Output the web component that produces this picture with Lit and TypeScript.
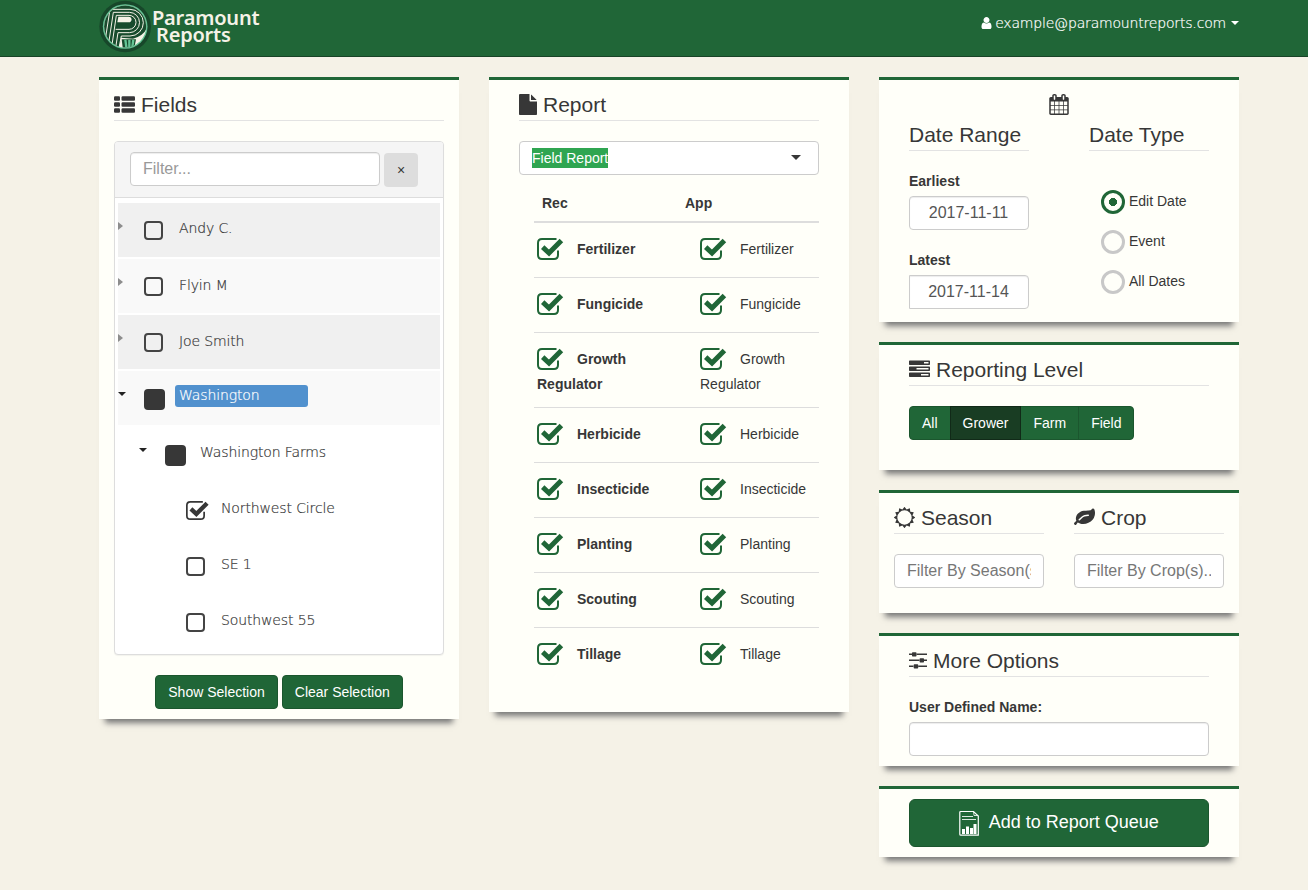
import { LitElement, html, css, svg, nothing } from "lit";
import { customElement } from "lit/decorators.js";

const row = (x: number, w: number, y: number) => svg`<rect x=${x} y=${y} width=${w} height="384" rx="96"/>`;

// Hollow sun: a ring of twelve short teeth around an open disc.
const sunPath = (() => {
  const pts: string[] = [];
  for (let i = 0; i < 24; i++) {
    const r = i % 2 ? 8.2 : 10.7;
    const a = (i * Math.PI) / 12;
    pts.push(`${(10.5 + r * Math.sin(a)).toFixed(2)} ${(10.5 - r * Math.cos(a)).toFixed(2)}`);
  }
  return `M${pts.join("L")}ZM10.5 3.3a7.2 7.2 0 1 0 0 14.4a7.2 7.2 0 1 0 0-14.4Z`;
})();

const icons = {
  list: html`<svg class="fa" width="21" height="21" viewBox="0 0 1792 1792">${[192, 704, 1216].map((y) => svg`${row(0, 512, y)}${row(640, 1152, y)}`)}</svg>`,
  file: html`<svg class="fa" width="18" height="21" viewBox="128 0 1536 1792"><path d="M1152 512v-472q22 14 36 28l408 408q14 14 28 36h-472zm-128 32q0 40 28 68t68 28h544v1056q0 40-28 68t-68 28h-1344q-40 0-68-28t-28-68v-1600q0-40 28-68t68-28h800v544z"/></svg>`,
  calendar: html`<svg class="fa" width="20" height="21" viewBox="64 0 1664 1792"><path fill-rule="evenodd" d="M192 1664h288v-288h-288v288zm352 0h320v-288h-320v288zm-352-352h288v-320h-288v320zm352 0h320v-320h-320v320zm-352-384h288v-288h-288v288zm736 736h320v-288h-320v288zm-384-736h320v-288h-320v288zm768 736h288v-288h-288v288zm-384-352h320v-320h-320v320zm-352-864v-288q0-13-9.500-22.500t-22.500-9.500h-64q-13 0-22.500 9.500t-9.500 22.500v288q0 13 9.500 22.500t22.500 9.500h64q13 0 22.500-9.500t9.500-22.500zm736 864h288v-320h-288v320zm-384-384h320v-288h-320v288zm384 0h288v-288h-288v288zm32-480v-288q0-13-9.500-22.500t-22.500-9.500h-64q-13 0-22.500 9.500t-9.500 22.500v288q0 13 9.500 22.500t22.500 9.500h64q13 0 22.500-9.500t9.500-22.500zm384-64v1280q0 52-38 90t-90 38h-1408q-52 0-90-38t-38-90v-1280q0-52 38-90t90-38h128v-96q0-66 47-113t113-47h64q66 0 113 47t47 113v96h384v-96q0-66 47-113t113-47h64q66 0 113 47t47 113v96h128q52 0 90 38t38 90z"/></svg>`,
  tasks: html`<svg class="fa" width="21" height="21" viewBox="0 0 1792 1792"><path fill-rule="evenodd" d="M1024 1408h640v-128h-640zM640 896h1024v-128h-1024zM1280 384h384v-128h-384zM64 1152h1664q64 0 64 64v256q0 64-64 64h-1664q-64 0-64-64v-256q0-64 64-64zM64 640h1664q64 0 64 64v256q0 64-64 64h-1664q-64 0-64-64v-256q0-64 64-64zM64 128h1664q64 0 64 64v256q0 64-64 64h-1664q-64 0-64-64v-256q0-64 64-64z"/></svg>`,
  sun: html`<svg class="fa" width="21" height="21" viewBox="0 0 21 21"><path fill-rule="evenodd" d=${sunPath}/></svg>`,
  leaf: html`<svg class="fa" width="21" height="21" viewBox="0 0 1792 1792"><path d="M1280 704q0-26-19-45t-45-19q-172 0-318 49.500t-259.500 134-235.500 219.500q-19 21-19 45 0 26 19 45t45 19q24 0 45-19 27-24 74-71t67-66q137-124 268.500-176t313.500-52q26 0 45-19t19-45zm512-198q0 95-20 193-46 224-184.500 383t-357.500 268q-214 108-438 108-148 0-286-47-15-5-88-42t-96-37q-16 0-39.500 32t-45 70-52.500 70-60 32q-43 0-63.500-17.500t-45.500-59.500q-2-4-6-11t-5.500-10-3-9.500-1.500-13.500q0-35 31-73.500t68-65.500 68-56 31-48q0-4-14-38t-16-44q-9-51-9-104 0-115 43.500-220t119-184.500 170.500-139 204-95.500q55-18 145-25.500t179.500-9 178.500-6 163.500-24 113.500-56.500l29.500-29.500 29.500-28 27-20 36.500-16 43.500-4.500q39 0 70.500 46t47.500 112 24 124 8 96z"/></svg>`,
  sliders: html`<svg class="fa" width="18" height="21" viewBox="0 0 18 21"><path d="M0 3.500h3v1.500h-3zM7.500 3.500h10.500v1.500h-10.500zM0 9.600h10.500v1.500h-10.500zM15 9.600h3v1.500h-3zM0 15.600h4.500v1.500h-4.500zM9.200 15.600h8.800v1.500h-8.800z"/><rect x="3" y="2.200" width="4.500" height="4.200" rx=".7"/><rect x="10.600" y="8.200" width="4.400" height="4.300" rx=".7"/><rect x="4.700" y="14.200" width="4.500" height="4.300" rx=".7"/></svg>`,
  user: html`<svg class="fa" width="11" height="14" viewBox="256 0 1280 1792"><path d="M1536 1399q0 109-62.500 187t-150.500 78h-854q-88 0-150.500-78t-62.500-187q0-85 8.500-160.500t31.500-152 58.500-131 94-89 134.500-34.500q131 128 313 128t313-128q76 0 134.500 34.500t94 89 58.500 131 31.500 152 8.500 160.500zm-256-887q0 159-112.500 271.500t-271.500 112.500-271.500-112.500-112.500-271.500 112.500-271.500 271.500-112.500 271.500 112.500 112.500 271.500z"/></svg>`,
  queue: html`<svg width="20" height="26" viewBox="0 0 20 26"><path d="M1.700 1.500H14.500L19.300 6V25.200H1.700Q.8 25.200 .8 24.300V2.400Q.8 1.500 1.700 1.500Z" fill="none" stroke="#fff" stroke-width="1.200"/><path d="M14.500 1.500L15 5.500H19" fill="none" stroke="#fff" stroke-width=".8"/><path d="M3 6.500h11M3 9.500h14" stroke="#fff" stroke-width="1" opacity=".85"/><path d="M3 19h3v5h-3zM7 16.500h3v7.500h-3zM11 18h3v6h-3zM14.500 14h3v10h-3z" fill="#fff"/></svg>`,
};

const tick = (size: number) => html`<svg class="tick" width=${(size * 27) / 22} height=${size} viewBox="0 0 27 22"><path d="M19.500 1H5Q1 1 1 5V17Q1 21 5 21H17Q21 21 21 17V12.500" fill="none" stroke="currentColor" stroke-width="2"/><path d="M5.700 9.200L12 15L24.400 2.500" fill="none" stroke="currentColor" stroke-width="5"/></svg>`;

const nodes = [
  { name: "Andy C.", level: 0, state: "off", arrow: "closed", tone: "dark", shift: "" },
  { name: "Flyin M", level: 0, state: "off", arrow: "closed", tone: "light", shift: "low" },
  { name: "Joe Smith", level: 0, state: "off", arrow: "closed", tone: "dark", shift: "low" },
  { name: "Washington", level: 0, state: "some", arrow: "open", tone: "light", shift: "picked" },
  { name: "Washington Farms", level: 1, state: "some", arrow: "open", tone: "", shift: "" },
  { name: "Northwest Circle", level: 2, state: "on", arrow: "", tone: "", shift: "" },
  { name: "SE 1", level: 2, state: "off", arrow: "", tone: "", shift: "" },
  { name: "Southwest 55", level: 2, state: "off", arrow: "", tone: "", shift: "" },
];

const kinds = ["Fertilizer", "Fungicide", "Growth Regulator", "Herbicide", "Insecticide", "Planting", "Scouting", "Tillage"];

@customElement("app-root")
export class AppRoot extends LitElement {
  static styles = css`
    :host { display: block; min-height: 890px; background: #f5f2e7; color: #373737; font: 14px/20px "Liberation Sans", Arial, sans-serif; }
    * { box-sizing: border-box; }
    svg { display: block; flex: none; }
    .fa { fill: currentColor; }
    .nav { height: 57px; background: #206637; border-bottom: 1px solid #184427; }
    .wrap { width: 1140px; margin-left: 99px; }
    .bar { display: flex; justify-content: space-between; align-items: flex-start; }
    .brand { display: flex; color: #f5f2e7; }
    .brand-name { width: 110px; font: 600 20px/17px "Noto Sans", sans-serif; padding-top: 9px; letter-spacing: -0.2px; }
    .brand-name div { white-space: nowrap; height: 17px; }
    .brand-name .second { padding-left: 4px; }
    .account { display: flex; align-items: center; height: 20px; margin-top: 13px; color: #fff; font: 200 14px/20px "DejaVu Sans", sans-serif; letter-spacing: -0.18px; -webkit-text-stroke: 0.2px currentColor; }
    .account .mail { margin: 0 5px 0 3px; }
    .caret { width: 0; height: 0; border: 4px solid transparent; border-top-color: currentColor; border-bottom: 0; flex: none; }
    .cols { display: grid; grid-template-columns: repeat(3, 360px); gap: 30px; margin-top: 20px; align-items: start; }
    .stack { display: flex; flex-direction: column; gap: 20px; }
    .card { background: #fffff9; border-top: 3px solid #206637; padding: 0 30px; box-shadow: 0 10px 6px -6px #777; }
    .narrow { padding: 0 15px; }
    .h-fields { height: 642px; } .h-report { height: 635px; } .h-date { height: 245px; } .h-level { height: 128px; }
    .h-season { height: 123px; } .h-more { height: 133px; } .h-add { height: 71px; padding-top: 10px; }
    .title { display: flex; align-items: flex-start; gap: 6px; height: 41px; padding-top: 13px; border-bottom: 1px solid #e3e3e3; font-size: 21px; line-height: 23px; margin-bottom: 20px; white-space: nowrap; }
    .title svg { margin-top: 1px; }
    .title.plain { height: 36px; padding-top: 8px; }
    input { display: block; width: 100%; height: 34px; border: 1px solid #ccc; border-radius: 4px; padding: 6px 12px; background: #fff; color: #555; font: 16px/20px "Liberation Sans", Arial, sans-serif; box-shadow: inset 0 1px 1px rgba(0,0,0,.075); outline: 0; }
    input::placeholder { color: #999; opacity: 1; }
    .flat { box-shadow: none; }
    .flat::placeholder { color: #777; }
    .center { text-align: center; padding: 6px 13px 6px 12px; }
    .square { border-radius: 0 4px 4px 0; }
    .panel { height: 514px; border: 1px solid #ddd; border-radius: 4px; background: #fff; overflow: hidden; box-shadow: 0 1px 1px rgba(0,0,0,.05); }
    .filter { display: flex; gap: 4px; height: 56px; padding: 10px 15px; background: #f5f5f5; border-bottom: 1px solid #ddd; }
    .filter input { width: 250px; }
    .clear { width: 34px; height: 34px; margin-top: 1px; border-radius: 4px; background: #ddd; text-align: center; line-height: 34px; }
    .tree { padding: 5px 3px 0; display: flex; flex-direction: column; gap: 2px; }
    .node { height: 54px; display: flex; align-items: flex-start; font: 200 14px/20px "DejaVu Sans", sans-serif; letter-spacing: -0.13px; -webkit-text-stroke: 0.2px currentColor; white-space: nowrap; }
    .dark { background: #f0f0f0; } .light { background: #f9f9f9; }
    .l1 { padding-left: 21px; } .l2 { padding-left: 42px; }
    .arrow { width: 26px; flex: none; }
    .closed { width: 0; height: 0; margin-right: 21px; margin-top: 19px; border: 4.500px solid transparent; border-left: 5px solid #8d8d8d; border-right: 0; }
    .open { width: 0; height: 0; margin: 21px 18px 0 0; border: 4px solid transparent; border-top-color: #222; border-bottom: 0; }
    .box { width: 31px; height: 30px; padding-top: 18px; flex: none; }
    .off { display: block; width: 19px; height: 19px; border: 2px solid #444; border-radius: 4px; }
    .some { display: block; width: 21px; height: 21px; border-radius: 4px; background: #373737; }
    .name { height: 22px; line-height: 22px; padding: 0 4px; margin-top: 14px; border-radius: 3px; }
    .low { margin-top: 15px; }
    .picked { background: #5191ce; color: #fff; width: 133px; line-height: 20px; }
    .actions { display: flex; justify-content: center; gap: 4px; margin-top: 20px; }
    .btn { height: 34px; padding: 6px 12px; border: 1px solid #1b562e; border-radius: 4px; background: #206637; color: #fff; line-height: 20px; white-space: nowrap; }
    .group { display: flex; }
    .group .btn { border-radius: 0; margin-left: -1px; }
    .group .btn:first-child { border-radius: 4px 0 0 4px; margin-left: 0; }
    .group .btn:last-child { border-radius: 0 4px 4px 0; padding-right: 11.500px; }
    .group .active { background: #193d23; border-color: #112a18; position: relative; }
    .add { display: flex; justify-content: center; align-items: center; gap: 9.500px; height: 48px; border-radius: 6px; font-size: 18px; }
    .add span { padding: 0 0 2px 0; }
    .select { display: flex; justify-content: space-between; align-items: flex-start; height: 34px; padding: 6px 17px 6px 12px; border: 1px solid #ccc; border-radius: 4px; background: #fff; }
    .select .mark { background: #2fa551; color: #fff; }
    .select .caret { border-width: 5px 5px 0; margin-top: 7px; }
    .table { margin: 10px 0 0 15px; }
    .thead { display: flex; height: 38px; padding: 8px 0 0 8px; font-weight: 700; border-bottom: 2px solid #ddd; }
    .thead div { width: 143px; flex: none; }
    .thead div:last-child { width: 134px; }
    .trow { display: flex; padding: 14px 0 15px 3px; border-bottom: 1px solid #ddd; line-height: 25px; }
    .trow.tall { padding-bottom: 10px; }
    .trow:last-child { border: 0; }
    .item { width: 163px; padding-right: 40px; flex: none; }
    .item:last-child { width: 119px; padding-right: 0; }
    .item .tick { float: left; margin: 1px 13px 0 0; }
    .item.bold { font-weight: 700; }
    .green { color: #206637; }
    .cal { display: flex; justify-content: center; padding-top: 14px; height: 35px; }
    .two { display: grid; grid-template-columns: 1fr 1fr; gap: 60px; }
    .two.tight { gap: 30px; }
    .label { display: block; font-weight: 700; height: 20px; margin-bottom: 5px; }
    .gap { margin-bottom: 20px; }
    .radios { display: flex; flex-direction: column; gap: 16px; padding: 19px 0 0 12px; }
    .radio { display: flex; gap: 4px; height: 24px; line-height: 22px; white-space: nowrap; }
    .ring { width: 24px; height: 24px; flex: none; border-radius: 50%; border: 3.500px solid #c8c8c8; }
    .ring.sel { border-color: #206637; background: radial-gradient(circle, #206637 3.800px, transparent 4.300px); }
  `;

  private heading(icon: unknown, text: string) {
    return html`<div class="title">${icon}<span>${text}</span></div>`;
  }

  private logo() {
    return html`<svg width="53" height="53" viewBox="26 1 159 159">
      <defs><clipPath id="disc"><circle cx="104.500" cy="80.500" r="63"/></clipPath></defs>
      <circle cx="104.500" cy="80.500" r="77.500" fill="#17472a"/>
      <circle cx="104.500" cy="80.500" r="67" fill="#64c495"/>
      <g clip-path="url(#disc)">
        <rect x="30" y="0" width="150" height="165" fill="#f5f2e7"/>
        <path d="M25 0H150L176 70Q166 108 128 117L92 114L84 160H25Z" fill="#184b2d"/>
        <g fill="none" stroke="#f5f2e7" stroke-width="3">
          <path d="M44 125L59 29H119A39 39 0 0 1 119 109H93L84 155"/>
          <path d="M54 137L69 38H117A30 30 0 0 1 117 99H83L75 150"/>
          <path d="M64 143L78 47H116A21 21 0 0 1 116 89H76"/>
        </g>
        <path d="M84 51H115A7 7 0 0 1 115 68H81Z" fill="#f5f2e7"/>
        <path d="M94 119H137L131 150H98Z" fill="#184b2d"/>
        <path d="M105 120L109 150M117 120V150M129 120L125 150" stroke="#64c495" stroke-width="7"/>
      </g>
    </svg>`;
  }

  private item(name: string, bold: boolean) {
    const [first, second] = name.split(" ");
    return html`<div class="item ${bold ? "bold" : ""}"><span class="green">${tick(22)}</span>${first}${second ? html`<br>${second}` : nothing}</div>`;
  }

  render() {
    return html`
      <header class="nav"><div class="wrap bar">
        <div class="brand">${this.logo()}<div class="brand-name"><div>Paramount</div><div class="second">Reports</div></div></div>
        <div class="account">${icons.user}<span class="mail">example@paramountreports.com</span><span class="caret"></span></div>
      </div></header>
      <main class="wrap cols">
        <section class="card narrow h-fields">
          ${this.heading(icons.list, "Fields")}
          <div class="panel">
            <div class="filter"><input placeholder="Filter..."><div class="clear">×</div></div>
            <div class="tree">${nodes.map((n) => html`
              <div class="node ${n.tone} l${n.level}">
                ${n.level < 2 ? html`<span class=${n.arrow}></span>` : html`<span class="arrow"></span>`}
                <span class="box">${n.state === "on" ? tick(19) : html`<span class=${n.state}></span>`}</span>
                <span class="name ${n.shift}">${n.name}</span>
              </div>`)}
            </div>
          </div>
          <div class="actions"><div class="btn">Show Selection</div><div class="btn">Clear Selection</div></div>
        </section>
        <section class="card h-report">
          ${this.heading(icons.file, "Report")}
          <div class="select"><span class="mark">Field Report</span><span class="caret"></span></div>
          <div class="table">
            <div class="thead"><div>Rec</div><div>App</div></div>
            ${kinds.map((k) => html`<div class="trow ${k.includes(" ") ? "tall" : ""}">${this.item(k, true)}${this.item(k, false)}</div>`)}
          </div>
        </section>
        <div class="stack">
          <section class="card h-date">
            <div class="cal">${icons.calendar}</div>
            <div class="two">
              <div>
                <div class="title plain">Date Range</div>
                <span class="label">Earliest</span><input class="center gap" .value=${"2017-11-11"}>
                <span class="label">Latest</span><input class="center square" .value=${"2017-11-14"}>
              </div>
              <div>
                <div class="title plain">Date Type</div>
                <div class="radios">
                  <div class="radio"><span class="ring sel"></span>Edit Date</div>
                  <div class="radio"><span class="ring"></span>Event</div>
                  <div class="radio"><span class="ring"></span>All Dates</div>
                </div>
              </div>
            </div>
          </section>
          <section class="card h-level">
            ${this.heading(icons.tasks, "Reporting Level")}
            <div class="group"><div class="btn">All</div><div class="btn active">Grower</div><div class="btn">Farm</div><div class="btn">Field</div></div>
          </section>
          <section class="card narrow h-season"><div class="two tight">
            <div>${this.heading(icons.sun, "Season")}<input class="flat" placeholder="Filter By Season(s)..."></div>
            <div>${this.heading(icons.leaf, "Crop")}<input class="flat" placeholder="Filter By Crop(s)..."></div>
          </div></section>
          <section class="card h-more">
            ${this.heading(icons.sliders, "More Options")}
            <span class="label">User Defined Name:</span><input>
          </section>
          <section class="card h-add"><div class="btn add">${icons.queue}<span>Add to Report Queue</span></div></section>
        </div>
      </main>`;
  }
}
